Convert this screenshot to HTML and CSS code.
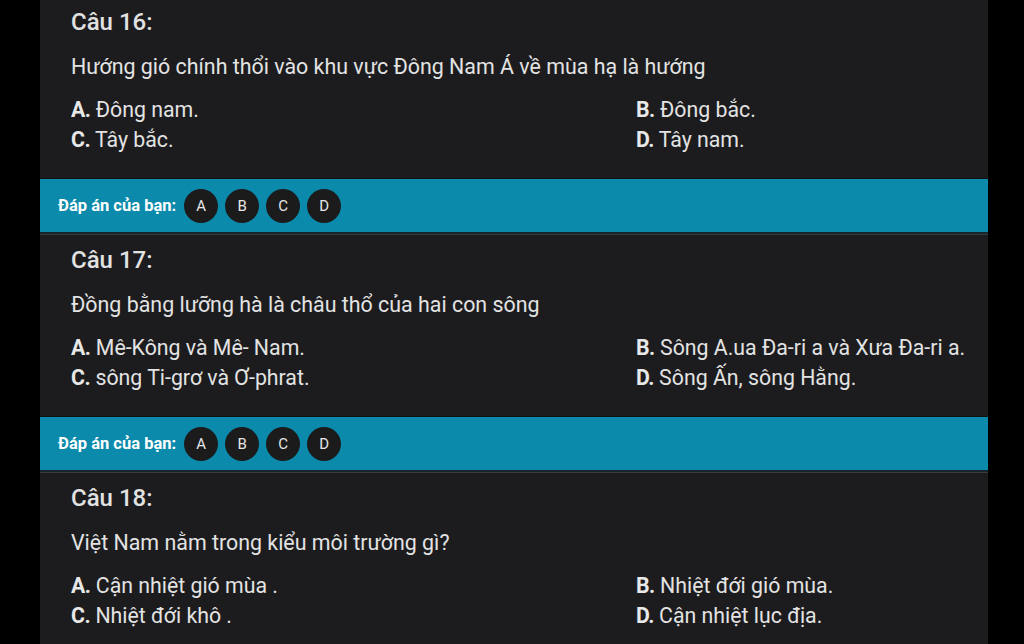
FILE: index.html
```html
<!DOCTYPE html>
<html lang="vi">
<head>
<meta charset="utf-8">
<link rel="stylesheet" href="styles.css">
</head>
<body>
<main class="page">
  <section class="question first">
    <h2 class="title">Câu 16:</h2>
    <p class="text">Hướng gió chính thổi vào khu vực Đông Nam Á về mùa hạ là hướng</p>
    <div class="options">
      <div class="opt"><b>A.</b> Đông nam.</div>
      <div class="opt"><b>B.</b> Đông bắc.</div>
      <div class="opt"><b>C.</b> Tây bắc.</div>
      <div class="opt"><b>D.</b> Tây nam.</div>
    </div>
  </section>
  <div class="answer">
    <span class="label">Đáp án của bạn:</span>
    <span class="choice">A</span><span class="choice">B</span><span class="choice">C</span><span class="choice">D</span>
  </div>
  <section class="question">
    <h2 class="title">Câu 17:</h2>
    <p class="text">Đồng bằng lưỡng hà là châu thổ của hai con sông</p>
    <div class="options">
      <div class="opt"><b>A.</b> Mê-Kông và Mê- Nam.</div>
      <div class="opt"><b>B.</b> Sông A.ua Đa-ri a và Xưa Đa-ri a.</div>
      <div class="opt"><b>C.</b> sông Ti-grơ và Ơ-phrat.</div>
      <div class="opt"><b>D.</b> Sông Ấn, sông Hằng.</div>
    </div>
  </section>
  <div class="answer">
    <span class="label">Đáp án của bạn:</span>
    <span class="choice">A</span><span class="choice">B</span><span class="choice">C</span><span class="choice">D</span>
  </div>
  <section class="question">
    <h2 class="title">Câu 18:</h2>
    <p class="text">Việt Nam nằm trong kiểu môi trường gì?</p>
    <div class="options">
      <div class="opt"><b>A.</b> Cận nhiệt gió mùa .</div>
      <div class="opt"><b>B.</b> Nhiệt đới gió mùa.</div>
      <div class="opt"><b>C.</b> Nhiệt đới khô .</div>
      <div class="opt"><b>D.</b> Cận nhiệt lục địa.</div>
    </div>
  </section>
</main>
</body>
</html>
```
FILE: styles.css
```css
html, body {
  margin: 0;
  padding: 0;
  background: #000;
  height: 644px;
  overflow: hidden;
}
body {
  font-family: Roboto, "Noto Sans", sans-serif;
  color: #e3e3e3;
}
.page {
  width: 948px;
  margin-left: 40px;
  background: #1c1c1e;
  min-height: 644px;
}
.question {
  padding: 9px 12px 23px 31px;
}
.question.first {
  padding-top: 6px;
}
.title {
  margin: 0;
  font-size: 24px;
  line-height: 32px;
  font-weight: 500;
  color: #e2e2e2;
}
.text {
  margin: 14px 0 13px;
  font-size: 21.4px;
  line-height: 30px;
  color: #e3e3e3;
}
.options {
  display: grid;
  grid-template-columns: 565px 1fr;
  font-size: 21.3px;
  line-height: 30px;
}
.opt {
  white-space: nowrap;
}
.opt b {
  font-weight: 700;
  color: #e8e8e8;
  letter-spacing: -0.5px;
}
.answer {
  display: flex;
  align-items: center;
  gap: 7px;
  height: 53px;
  padding-left: 18px;
  background: #0b8aab;
  border-top: 1px solid #101314;
  border-bottom: 2px solid #17252a;
  box-shadow: 0 1px 0 #3a3b3c;
  margin-bottom: 1px;
}
.label {
  font-size: 16.5px;
  font-weight: 700;
  color: #ffffff;
  margin-right: 1px;
}
.choice {
  width: 34px;
  height: 34px;
  border-radius: 50%;
  background: #1b1b1c;
  color: #e6e6e6;
  font-size: 15px;
  display: flex;
  align-items: center;
  justify-content: center;
}
```
